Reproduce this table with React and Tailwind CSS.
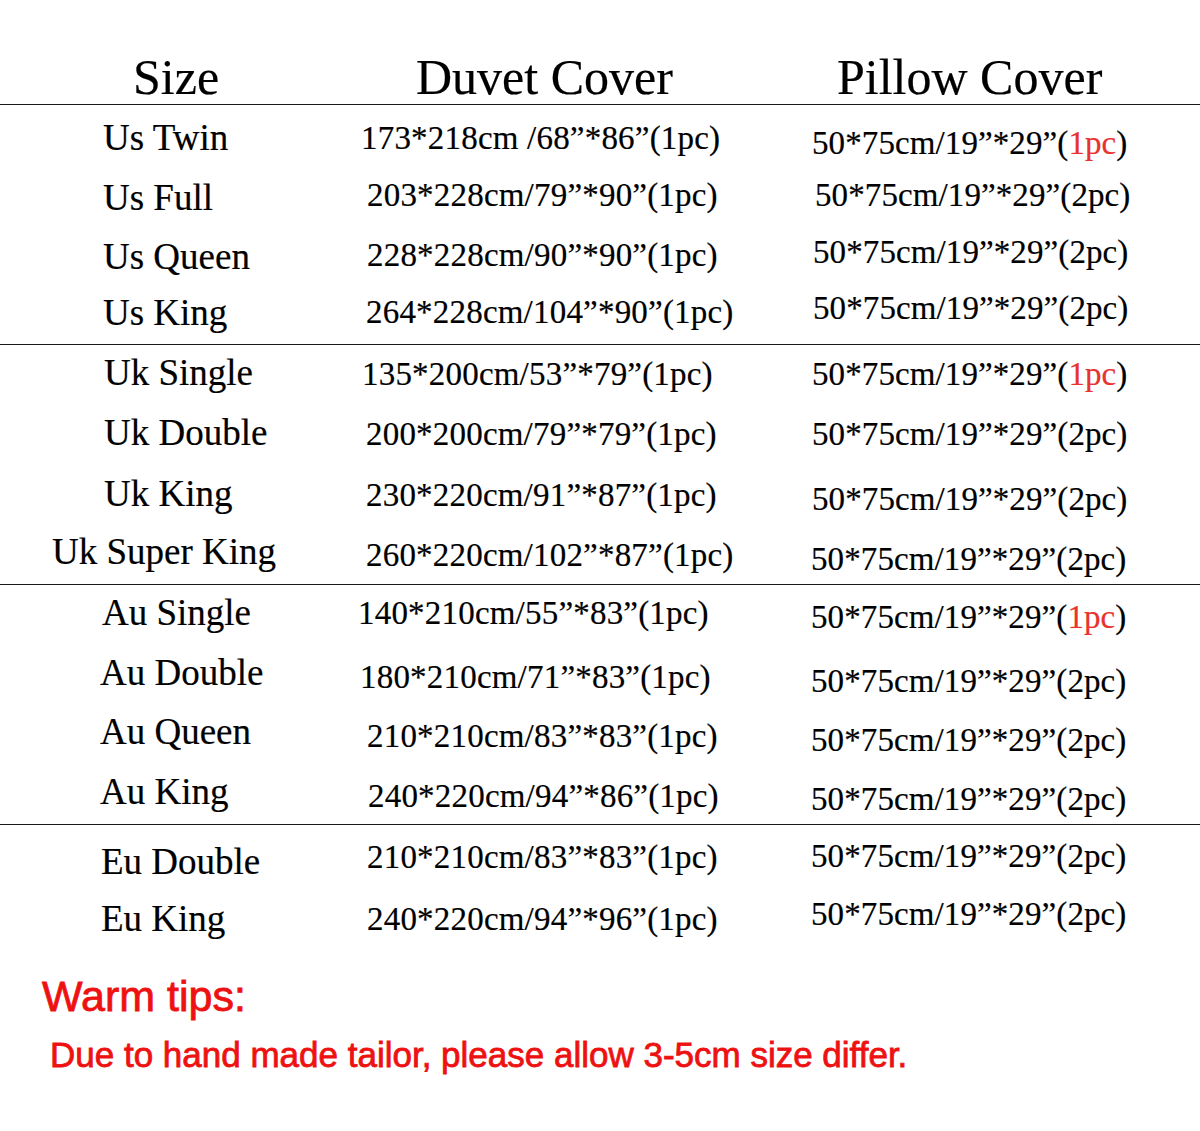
import React from "react";

const groups = [
  {
    border: true,
    rows: [
      { h: "h-[62px]", size: "Us Twin", s: "pl-[103px] pt-[14px]", duvet: "173*218cm /68”*86”(1pc)", d: "pl-[21px] pt-[17px]", p: "pl-[22px] pt-[22px]", pcs: "1pc", red: true },
      { h: "h-[60px]", size: "Us Full", s: "pl-[103px] pt-[12px]", duvet: "203*228cm/79”*90”(1pc)", d: "pl-[27px] pt-[12px]", p: "pl-[25px] pt-[12px]", pcs: "2pc" },
      { h: "h-[58px]", size: "Us Queen", s: "pl-[103px] pt-[11px]", duvet: "228*228cm/90”*90”(1pc)", d: "pl-[27px] pt-[12px]", p: "pl-[23px] pt-[9px]", pcs: "2pc" },
      { h: "h-[59px]", size: "Us King", s: "pl-[103px] pt-[9px]", duvet: "264*228cm/104”*90”(1pc)", d: "pl-[26px] pt-[11px]", p: "pl-[23px] pt-[7px]", pcs: "2pc" },
    ],
  },
  {
    border: true,
    rows: [
      { h: "h-[59px]", size: "Uk Single", s: "pl-[104px] pt-[9px]", duvet: "135*200cm/53”*79”(1pc)", d: "pl-[22px] pt-[13px]", p: "pl-[22px] pt-[13px]", pcs: "1pc", red: true },
      { h: "h-[60px]", size: "Uk Double", s: "pl-[104px] pt-[10px]", duvet: "200*200cm/79”*79”(1pc)", d: "pl-[26px] pt-[14px]", p: "pl-[22px] pt-[14px]", pcs: "2pc" },
      { h: "h-[62px]", size: "Uk King", s: "pl-[104px] pt-[11px]", duvet: "230*220cm/91”*87”(1pc)", d: "pl-[26px] pt-[15px]", p: "pl-[22px] pt-[19px]", pcs: "2pc" },
      { h: "h-[58px]", size: "Uk Super King", s: "pl-[52px] pt-[7px]", duvet: "260*220cm/102”*87”(1pc)", d: "pl-[26px] pt-[13px]", p: "pl-[21px] pt-[17px]", pcs: "2pc" },
    ],
  },
  {
    border: true,
    rows: [
      { h: "h-[60px]", size: "Au Single", s: "pl-[102px] pt-[9px]", duvet: "140*210cm/55”*83”(1pc)", d: "pl-[18px] pt-[12px]", p: "pl-[21px] pt-[16px]", pcs: "1pc", red: true },
      { h: "h-[60px]", size: "Au Double", s: "pl-[100px] pt-[9px]", duvet: "180*210cm/71”*83”(1pc)", d: "pl-[20px] pt-[16px]", p: "pl-[21px] pt-[20px]", pcs: "2pc" },
      { h: "h-[60px]", size: "Au Queen", s: "pl-[100px] pt-[8px]", duvet: "210*210cm/83”*83”(1pc)", d: "pl-[27px] pt-[15px]", p: "pl-[21px] pt-[19px]", pcs: "2pc" },
      { h: "h-[59px]", size: "Au King", s: "pl-[100px] pt-[8px]", duvet: "240*220cm/94”*86”(1pc)", d: "pl-[28px] pt-[15px]", p: "pl-[21px] pt-[18px]", pcs: "2pc" },
    ],
  },
  {
    border: false,
    rows: [
      { h: "h-[62px]", size: "Eu Double", s: "pl-[101px] pt-[18px]", duvet: "210*210cm/83”*83”(1pc)", d: "pl-[27px] pt-[16px]", p: "pl-[21px] pt-[15px]", pcs: "2pc" },
      { h: "h-[60px]", size: "Eu King", s: "pl-[101px] pt-[13px]", duvet: "240*220cm/94”*96”(1pc)", d: "pl-[27px] pt-[16px]", p: "pl-[21px] pt-[11px]", pcs: "2pc" },
    ],
  },
];

const Row = ({ row }) => (
  <div className={`flex ${row.h}`}>
    <div className={`w-[340px] shrink-0 text-[37px] leading-none whitespace-nowrap ${row.s}`}>
      {row.size}
    </div>
    <div className={`w-[450px] shrink-0 text-[33px] tracking-[0.2px] leading-none whitespace-nowrap ${row.d}`}>
      {row.duvet}
    </div>
    <div className={`flex-1 text-[33px] tracking-[0.1px] leading-none whitespace-nowrap ${row.p}`}>
      50*75cm/19”*29”(
      <span className={row.red ? "text-[#e8332e] [-webkit-text-stroke:0.2px_#e8332e]" : ""}>{row.pcs}</span>)
    </div>
  </div>
);

export default function App() {
  return (
    <div className="w-[1200px] h-[1131px] bg-white overflow-hidden text-black [-webkit-text-stroke:0.2px_black] font-['Liberation_Serif','Times_New_Roman',serif]">
      <div className="flex h-[105px] border-b border-[#1a1a1a] text-[50px] leading-none whitespace-nowrap">
        <div className="w-[340px] shrink-0 pl-[133px] pt-[52px]">Size</div>
        <div className="w-[450px] shrink-0 pl-[76px] pt-[52px]">Duvet Cover</div>
        <div className="flex-1 pl-[47px] pt-[52px]">Pillow Cover</div>
      </div>

      {groups.map((g, i) => (
        <div key={i} className={g.border ? "border-b border-[#1a1a1a]" : ""}>
          {g.rows.map((row) => (
            <Row key={row.size} row={row} />
          ))}
        </div>
      ))}

      <div className="font-['Liberation_Sans',Arial,sans-serif] text-[#ee1111] [-webkit-text-stroke:0.8px_#ee1111] leading-none whitespace-nowrap">
        <div className="pl-[42px] pt-[28px] text-[43px]">Warm tips:</div>
        <div className="pl-[50px] pt-[19px] text-[35px]">
          Due to hand made tailor, please allow 3-5cm size differ.
        </div>
      </div>
    </div>
  );
}
